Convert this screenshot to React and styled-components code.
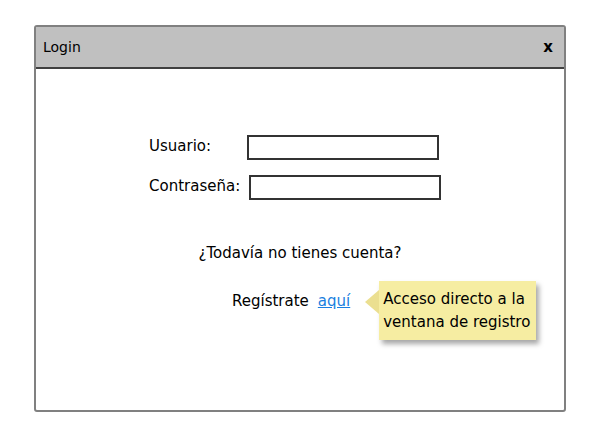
import React from "react";
import styled, { createGlobalStyle } from "styled-components";

const GlobalStyle = createGlobalStyle`
  body {
    margin: 0;
    background: #ffffff;
  }
`;

export default function App() {
  return (
    <>
      <GlobalStyle />
      <Page>
        <Window>
          <TitleBar>
            <Title>Login</Title>
            <Close>x</Close>
          </TitleBar>
          <Body>
            <Form>
              <Label>Usuario:</Label>
              <Input />
              <Label>Contraseña:</Label>
              <Input $shift={2} />
            </Form>
            <Question>¿Todavía no tienes cuenta?</Question>
            <RegisterRow>
              <Text>Regístrate</Text>
              <Link href="#">aquí</Link>
              <Note>
                <Arrow />
                Acceso directo a la
                <br />
                ventana de registro
              </Note>
            </RegisterRow>
          </Body>
        </Window>
      </Page>
    </>
  );
}

const Page = styled.div`
  width: 600px;
  height: 442px;
  padding: 25px 0 0 34px;
  box-sizing: border-box;
`;

const Window = styled.div`
  width: 532px;
  height: 387px;
  box-sizing: border-box;
  border: 2px solid #808080;
  border-radius: 3px;
  display: flex;
  flex-direction: column;
`;

const TitleBar = styled.div`
  height: 42px;
  box-sizing: border-box;
  background: #c0c0c0;
  border-bottom: 2px solid #404040;
  display: flex;
  align-items: center;
  justify-content: space-between;
  padding: 0 11px 0 7px;
`;

const Title = styled.div`
  font-family: "DejaVu Sans", sans-serif;
  font-size: 14px;
  color: #000;
`;

const Close = styled.div`
  font-family: "DejaVu Sans", sans-serif;
  font-size: 15px;
  font-weight: bold;
  color: #000;
`;

const Body = styled.div`
  display: flex;
  flex-direction: column;
  font-family: "Comic Sans MS", "DejaVu Sans", sans-serif;
  font-size: 15px;
  color: #000;
`;

const Form = styled.div`
  display: grid;
  grid-template-columns: 98px 192px;
  row-gap: 15px;
  align-items: center;
  margin: 66px 0 0 113px;
`;

const Label = styled.div`
  line-height: 20px;
  margin-top: -4px;
`;

const Input = styled.div`
  width: 192px;
  height: 25px;
  box-sizing: border-box;
  border: 2px solid #333333;
  margin-left: ${(p) => p.$shift || 0}px;
`;

const Question = styled.div`
  margin-top: 43px;
  line-height: 20px;
  text-align: center;
`;

const RegisterRow = styled.div`
  display: flex;
  align-items: flex-start;
  margin: 18px 0 0 196px;
`;

const Text = styled.span`
  line-height: 20px;
  margin-top: 10px;
`;

const Link = styled.a`
  line-height: 20px;
  margin: 10px 0 0 9px;
  color: #1b7fe0;
  text-decoration: underline;
`;

const Note = styled.div`
  position: relative;
  margin-left: 29px;
  width: 157px;
  height: 59px;
  box-sizing: border-box;
  padding: 7px 0 0 4px;
  background: #f6eda2;
  box-shadow: 3px 4px 5px rgba(0, 0, 0, 0.35);
  line-height: 23px;
  font-size: 15px;
  white-space: nowrap;
`;

const Arrow = styled.div`
  position: absolute;
  left: -14px;
  top: 9px;
  width: 0;
  height: 0;
  border-top: 12px solid transparent;
  border-bottom: 12px solid transparent;
  border-right: 14px solid #ebdf90;
`;
